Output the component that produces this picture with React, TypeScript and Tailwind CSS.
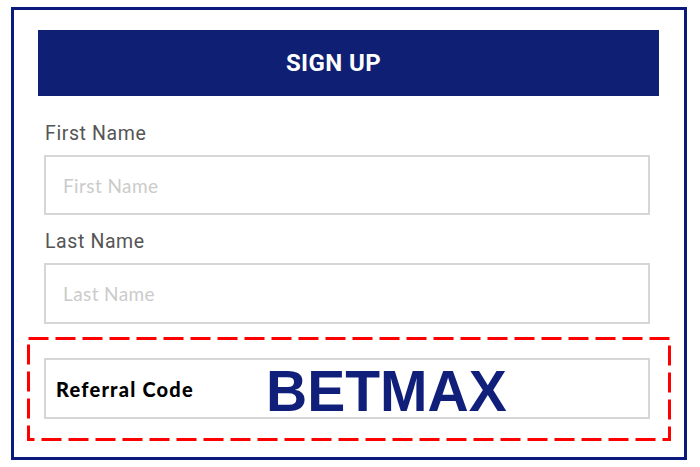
import React from "react";

export default function App() {
  return (
    <div className="w-[700px] h-[467px] bg-white overflow-hidden">
      <div className="ml-[11px] mt-[7px] w-[676px] h-[453px] border-[3px] border-[#0b1a7d] pt-[20px] flex flex-col">
        <div className="ml-[24px] w-[621px] h-[66px] bg-[#0f1f74] flex items-center justify-center pr-[30px]">
          <span
            className="text-white font-bold text-[24px] leading-none tracking-[0.4px]"
            style={{ fontFamily: "Roboto, 'Liberation Sans', sans-serif" }}
          >
            SIGN UP
          </span>
        </div>

        <div className="ml-[30px] w-[606px] flex flex-col" style={{ fontFamily: "Roboto, 'Liberation Sans', sans-serif" }}>
          <label className="mt-[26px] text-[19.5px] leading-[24px] tracking-[0.6px] text-[#555555] pl-[1px]">First Name</label>
          <input
            placeholder="First Name"
            className="mt-[9px] h-[60px] border-2 border-[#d6d6d6] pl-[17px] text-[19px] tracking-[0.4px] placeholder:text-[#cbcbcb] outline-none"
            style={{ fontFamily: "Lato, 'Liberation Sans', sans-serif" }}
          />
          <label className="mt-[15px] text-[19.5px] leading-[24px] tracking-[0.6px] text-[#555555] pl-[1px]">Last Name</label>
          <input
            placeholder="Last Name"
            className="mt-[9px] h-[61px] border-2 border-[#d6d6d6] pl-[17px] text-[19px] tracking-[0.4px] placeholder:text-[#cbcbcb] outline-none"
            style={{ fontFamily: "Lato, 'Liberation Sans', sans-serif" }}
          />
        </div>

        <div className="relative ml-[13px] mt-[13px] w-[644px] h-[104px] pt-[21px] pl-[17px]">
          <svg className="absolute inset-0" width="644" height="104" viewBox="0 0 644 104">
            <rect
              x="1.5"
              y="1.5"
              width="641"
              height="101"
              fill="none"
              stroke="#ff0000"
              strokeWidth="3"
              strokeDasharray="20 7"
            />
          </svg>
          <div className="relative w-[606px] h-[61px] border-2 border-[#d6d6d6] flex items-center pl-[10px]">
            <span
              className="w-[210px] font-black text-[20px] tracking-[1.2px] text-black leading-none"
              style={{ fontFamily: "Lato, 'Liberation Sans', sans-serif" }}
            >
              Referral Code
            </span>
            <span
              className="font-bold text-[57px] leading-none text-[#0f1f7a] mt-[6px]"
              style={{ fontFamily: "'Liberation Sans', Arial, sans-serif" }}
            >
              BETMAX
            </span>
          </div>
        </div>
      </div>
    </div>
  );
}
